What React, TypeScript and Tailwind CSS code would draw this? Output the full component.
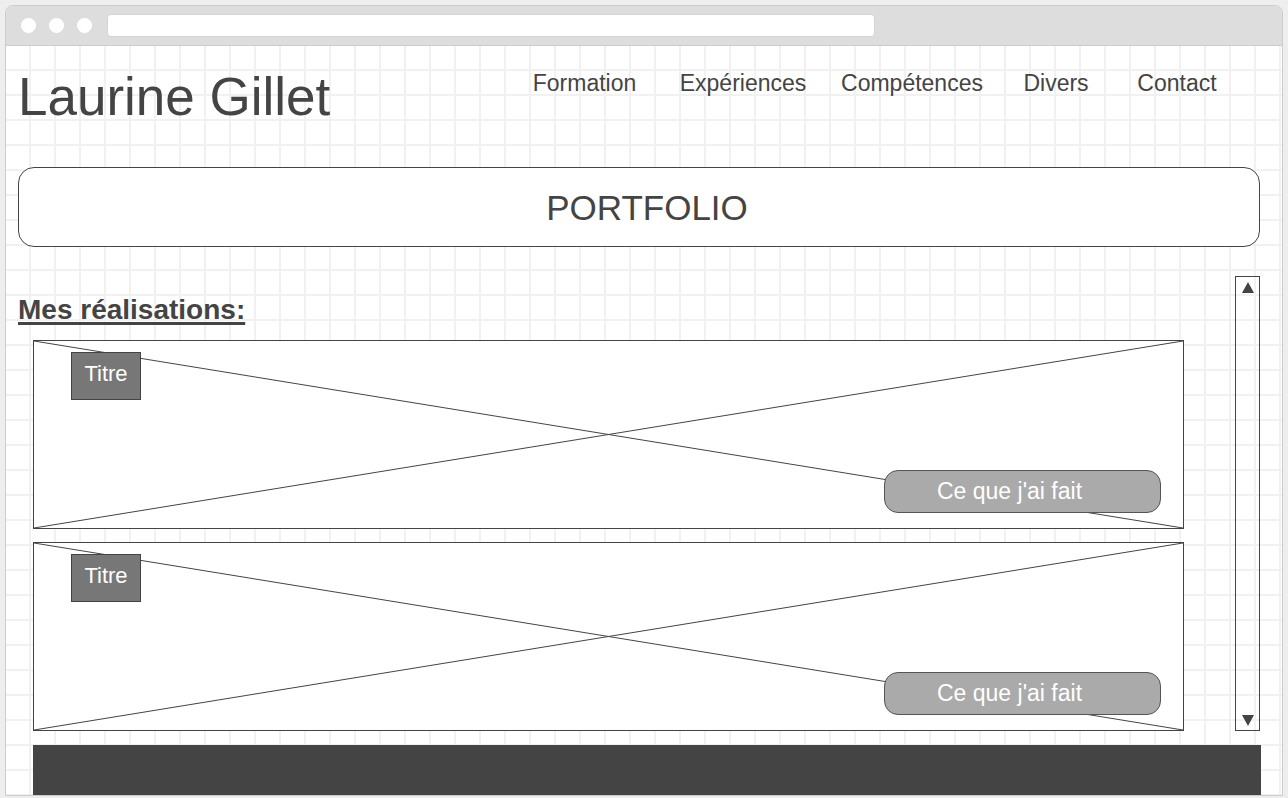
const navItems = [
  { label: "Formation", width: "w-[159px]" },
  { label: "Expériences", width: "w-[158px]" },
  { label: "Compétences", width: "w-[180px]" },
  { label: "Divers", width: "w-[108px]" },
  { label: "Contact", width: "w-[134px]" },
];

function ProjectCard() {
  return (
    <div className="relative flex h-[189px] w-[1151px] flex-col border border-[#444444] bg-white">
      <svg
        className="pointer-events-none absolute inset-0 h-full w-full"
        viewBox="0 0 100 100"
        preserveAspectRatio="none"
      >
        <line x1="0" y1="0" x2="100" y2="100" stroke="#444444" strokeWidth="1" vectorEffect="non-scaling-stroke" />
        <line x1="0" y1="100" x2="100" y2="0" stroke="#444444" strokeWidth="1" vectorEffect="non-scaling-stroke" />
      </svg>

      <div className="relative ml-[37px] mt-[11px] flex h-[48px] w-[70px] items-center justify-center border border-[#444444] bg-[#777777] pb-[5px] text-[22px] leading-none text-white">
        Titre
      </div>

      <div className="relative mb-[15px] mr-[22px] mt-auto flex h-[43px] w-[277px] items-center self-end rounded-[14px] border border-[#555555] bg-[#aaaaaa] pl-[52px] text-[23px] leading-none text-white">
        Ce que j'ai fait
      </div>
    </div>
  );
}

export default function App() {
  return (
    <div className="h-[798px] w-[1288px] bg-[#eeeeee] px-[5px] pt-[5px] font-['Liberation_Sans',Arial,sans-serif]">
      <div className="flex h-[791px] flex-col overflow-hidden rounded-t-[8px] border border-[#cccccc]">
        {/* browser chrome */}
        <div className="flex h-[40px] flex-none items-center border-b border-[#cccccc] bg-[#dddddd] pl-[15px]">
          <span className="h-[15px] w-[15px] rounded-full bg-white" />
          <span className="ml-[13px] h-[15px] w-[15px] rounded-full bg-white" />
          <span className="ml-[13px] h-[15px] w-[15px] rounded-full bg-white" />
          <span className="ml-[15px] h-[23px] w-[768px] rounded-[4px] border border-[#d4d4d4] bg-white" />
        </div>

        {/* page */}
        <div className="flex-1 overflow-hidden bg-white bg-[linear-gradient(to_right,#f1f1f1_2px,transparent_2px),linear-gradient(to_bottom,#f1f1f1_2px,transparent_2px)] bg-[size:25px_25px] bg-[position:23px_23px] text-[#444444]">
          <header className="flex items-start pl-[12px]">
            <h1 className="mt-[24px] text-[53px] leading-none">Laurine Gillet</h1>
            <nav className="ml-auto mr-[38px] mt-[26px] flex">
              {navItems.map((item) => (
                <span key={item.label} className={`${item.width} text-center text-[23px] leading-none`}>
                  {item.label}
                </span>
              ))}
            </nav>
          </header>

          <div className="ml-[12px] mr-[22px] mt-[44px] flex h-[80px] items-center justify-center rounded-[16px] border border-[#444444] bg-white pl-[16px] text-[35px] leading-none">
            PORTFOLIO
          </div>

          <div className="mt-[29px] flex pl-[12px]">
            <div className="flex-1 pt-[20px]">
              <h2 className="text-[28px] font-bold leading-none underline decoration-[3px] underline-offset-[3px]">
                Mes réalisations:
              </h2>
              <div className="ml-[15px] mt-[16px] flex flex-col gap-[13px]">
                <ProjectCard />
                <ProjectCard />
              </div>
            </div>

            <div className="mr-[22px] flex h-[455px] w-[25px] flex-col items-center justify-between border border-[#444444] pb-[4px] pt-[5px]">
              <svg width="12" height="11" viewBox="0 0 12 11">
                <path d="M6 0 L12 11 L0 11 Z" fill="#444444" />
              </svg>
              <svg width="12" height="11" viewBox="0 0 12 11">
                <path d="M0 0 L12 0 L6 11 Z" fill="#444444" />
              </svg>
            </div>
          </div>

          <div className="ml-[27px] mt-[14px] h-[60px] w-[1228px] bg-[#444444]" />
        </div>
      </div>
    </div>
  );
}
